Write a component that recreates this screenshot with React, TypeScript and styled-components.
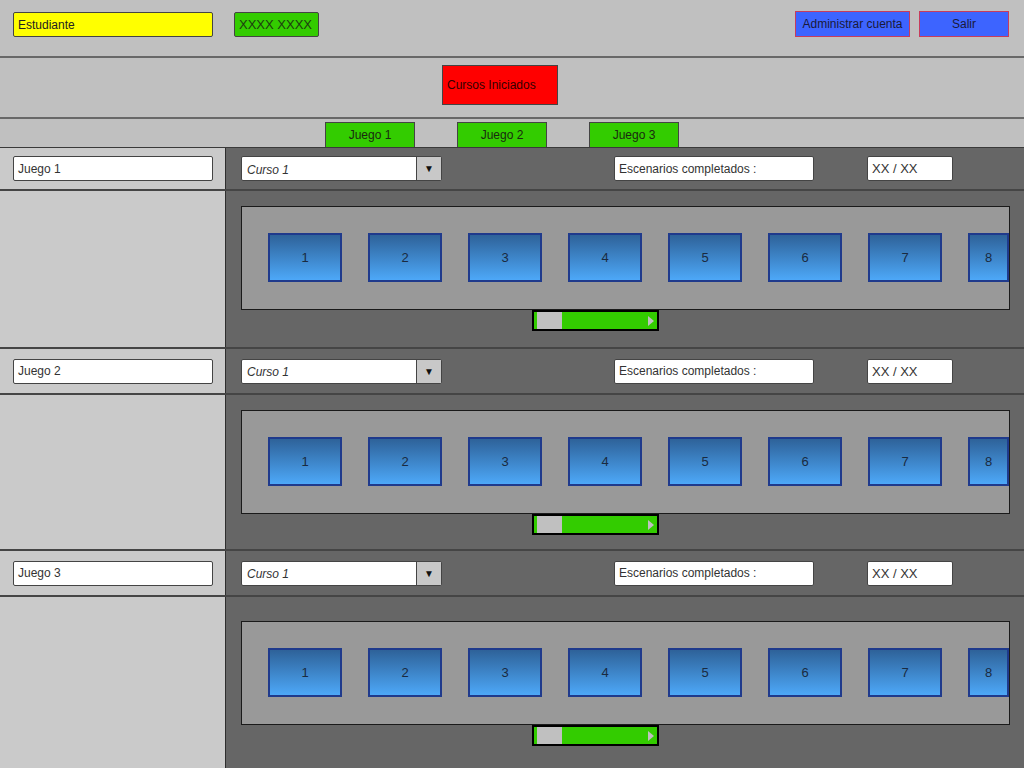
import React from 'react'
import styled, { createGlobalStyle } from 'styled-components'

const GlobalStyle = createGlobalStyle`
	html, body {
		margin: 0;
		padding: 0;
		background: #666666;
	}
	body {
		font-family: 'Liberation Sans', Arial, sans-serif;
		font-size: 12px;
		color: #222222;
	}
`

interface SectionSpec {
	name: string
	headH: number
	bodyH: number
	padTop: number
}

const sections: SectionSpec[] = [
	{ name: 'Juego 1', headH: 41, bodyH: 156, padTop: 15 },
	{ name: 'Juego 2', headH: 44, bodyH: 154, padTop: 15 },
	{ name: 'Juego 3', headH: 44, bodyH: 172, padTop: 24 },
]

const tiles = [1, 2, 3, 4, 5, 6, 7, 8]

const Tabs = ['Juego 1', 'Juego 2', 'Juego 3']

const Section: React.FC<{ spec: SectionSpec }> = ({ spec }) => (
	<>
		<Row height={spec.headH}>
			<LeftCell>
				<NameBox>{spec.name}</NameBox>
			</LeftCell>
			<RightHead>
				<Select>
					<SelectText>Curso 1</SelectText>
					<SelectArrow>▼</SelectArrow>
				</Select>
				<InfoBox>Escenarios completados :</InfoBox>
				<CountBox>XX / XX</CountBox>
			</RightHead>
		</Row>
		<Row height={spec.bodyH} last={spec.name === 'Juego 3'}>
			<LeftCell />
			<RightBody padTop={spec.padTop}>
				<Panel>
					{tiles.map(n => (
						<Tile key={n} squeeze={n === tiles.length}>
							{n}
						</Tile>
					))}
				</Panel>
				<Scroll>
					<ScrollEdge />
					<ScrollThumb />
					<ScrollTrack />
					<ScrollArrow />
				</Scroll>
			</RightBody>
		</Row>
	</>
)

const App: React.FC = () => (
	<Page>
		<GlobalStyle />
		<Header>
			<RoleBox>Estudiante</RoleBox>
			<UserBox>XXXX XXXX</UserBox>
			<Spacer />
			<HeadButton>Administrar cuenta</HeadButton>
			<HeadButton narrow>Salir</HeadButton>
		</Header>
		<TitleBand>
			<TitleBox>Cursos Iniciados</TitleBox>
		</TitleBand>
		<TabBand>
			{Tabs.map(t => (
				<Tab key={t}>{t}</Tab>
			))}
		</TabBand>
		<Main>
			{sections.map(s => (
				<Section key={s.name} spec={s} />
			))}
		</Main>
	</Page>
)

export default App

const Page = styled.div`
	width: 1024px;
	height: 768px;
	overflow: hidden;
	background: #c0c0c0;
	display: flex;
	flex-direction: column;
`

const Header = styled.div`
	height: 56px;
	box-sizing: content-box;
	border-bottom: 2px solid #686868;
	display: flex;
	align-items: flex-start;
	padding: 0 15px 0 13px;
`

const Spacer = styled.div`
	flex: 1;
`

const Box = styled.div`
	box-sizing: border-box;
	height: 25px;
	border: 1.5px solid #444444;
	border-radius: 2px;
	display: flex;
	align-items: center;
	padding: 0 4px;
	white-space: nowrap;
`

const RoleBox = styled(Box)`
	margin-top: 12px;
	width: 200px;
	background: #ffff00;
`

const UserBox = styled(Box)`
	margin-top: 12px;
	margin-left: 21px;
	width: 85px;
	background: #33cc00;
	font-size: 13px;
	color: #1d3d10;
`

const HeadButton = styled(Box)<{ narrow?: boolean }>`
	margin-top: 11px;
	height: 26px;
	width: ${({ narrow }) => (narrow ? 90 : 115)}px;
	margin-left: ${({ narrow }) => (narrow ? 9 : 0)}px;
	justify-content: center;
	background: #3d64ff;
	border: 1.5px solid #c83c5c;
	border-radius: 0;
	color: #1a1a3a;
`

const TitleBand = styled.div`
	height: 59px;
	border-bottom: 2px solid #686868;
	display: flex;
	align-items: flex-start;
	padding-left: 442px;
`

const TitleBox = styled(Box)`
	margin-top: 7px;
	width: 116px;
	height: 40px;
	background: #ff0000;
	border-radius: 0;
	color: #330000;
`

const TabBand = styled.div`
	height: 28px;
	display: flex;
	align-items: flex-end;
	gap: 42px;
	padding-left: 325px;
	border-bottom: 1px solid #3a3a3a;
`

const Tab = styled(Box)`
	width: 90px;
	height: 25px;
	justify-content: center;
	background: #33cc00;
	border-radius: 0;
	border-bottom: none;
	color: #1a2a10;
`

const Main = styled.div`
	flex: 1;
	display: flex;
	flex-direction: column;
`

const Row = styled.div<{ height: number; last?: boolean }>`
	height: ${({ height }) => height}px;
	flex: ${({ last }) => (last ? 1 : 'none')};
	display: grid;
	grid-template-columns: 226px minmax(0, 1fr);
	border-bottom: ${({ last }) => (last ? 'none' : '2px solid #454545')};
`

const LeftCell = styled.div`
	background: #cacaca;
	border-right: 1px solid #2e2e2e;
	display: flex;
	align-items: center;
	padding-left: 13px;
`

const NameBox = styled(Box)`
	width: 200px;
	background: #ffffff;
	color: #333333;
`

const RightHead = styled.div`
	background: #666666;
	display: flex;
	align-items: center;
	padding-left: 15px;
`

const Select = styled.div`
	box-sizing: border-box;
	width: 201px;
	height: 25px;
	display: flex;
	background: #ffffff;
	border: 1.5px solid #444444;
	border-radius: 2px;
`

const SelectText = styled.div`
	flex: 1;
	display: flex;
	align-items: center;
	padding: 2px 5px 0;
	font-style: italic;
	color: #333333;
`

const SelectArrow = styled.div`
	width: 24px;
	background: #c8c8c8;
	border-left: 1.5px solid #444444;
	display: flex;
	align-items: center;
	justify-content: center;
	font-size: 10px;
	color: #111111;
`

const InfoBox = styled(Box)`
	margin-left: 172px;
	width: 200px;
	background: #ffffff;
	color: #333333;
`

const CountBox = styled(Box)`
	margin-left: 53px;
	width: 86px;
	background: #ffffff;
	color: #333333;
	font-size: 13px;
`

const RightBody = styled.div<{ padTop: number }>`
	min-width: 0;
	background: #666666;
	padding: ${({ padTop }) => padTop}px 14px 0 15px;
	display: flex;
	flex-direction: column;
`

const Panel = styled.div`
	box-sizing: border-box;
	height: 104px;
	background: #999999;
	border: 1.5px solid #1a1a1a;
	display: flex;
	align-items: center;
	gap: 26px;
	padding: 0 0 2px 26px;
	overflow: hidden;
`

const Tile = styled.div<{ squeeze?: boolean }>`
	box-sizing: border-box;
	flex: ${({ squeeze }) => (squeeze ? '0 1 74px' : 'none')};
	min-width: 0;
	width: 74px;
	height: 49px;
	border: 2px solid #1f3a8c;
	background: linear-gradient(#2e6299, #4da8f8);
	display: flex;
	align-items: center;
	justify-content: center;
	font-size: 13px;
	color: #1a2a40;
`

const Scroll = styled.div`
	box-sizing: border-box;
	margin-left: 291px;
	width: 127px;
	height: 21px;
	border: 2px solid #000000;
	background: #33cc00;
	display: flex;
	align-items: center;
`

const ScrollEdge = styled.div`
	width: 3px;
	height: 100%;
`

const ScrollThumb = styled.div`
	width: 25px;
	height: 100%;
	background: #c0c0c0;
`

const ScrollTrack = styled.div`
	flex: 1;
`

const ScrollArrow = styled.div`
	width: 0;
	height: 0;
	margin-right: 3px;
	border-top: 5px solid transparent;
	border-bottom: 5px solid transparent;
	border-left: 6px solid #c0c0c0;
`
